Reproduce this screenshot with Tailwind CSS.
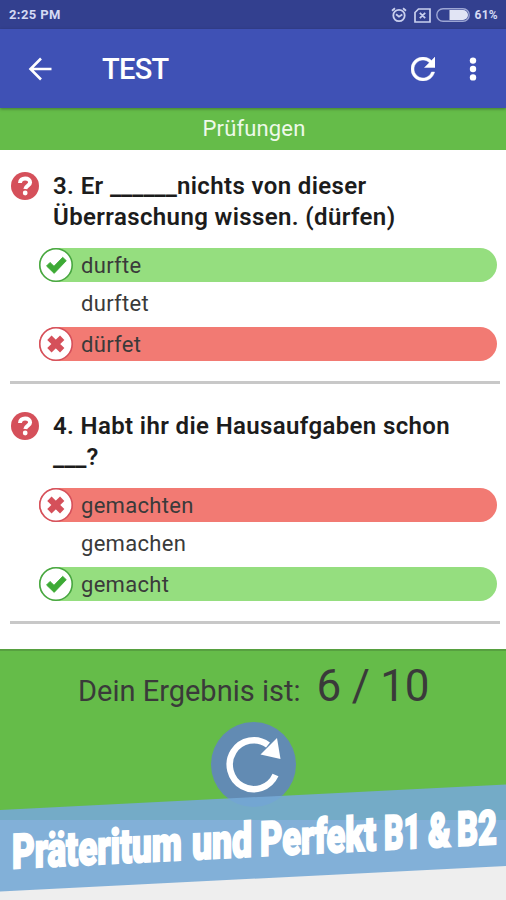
<!DOCTYPE html>
<html lang="de">
<head>
<meta charset="utf-8">
<title>Test</title>
<script src="https://cdn.jsdelivr.net/npm/@tailwindcss/browser@4"></script>
</head>
<body class="w-[506px] h-[900px] overflow-hidden bg-[#eeeeee] font-['Roboto',sans-serif] text-[#3a3a3a]">
<svg class="hidden">
  <symbol id="help" viewBox="0 0 28 28"><circle cx="14" cy="14" r="14" fill="#d5505a"/><path d="M9 11C9 8 11.2 6.5 14.1 6.5C17.1 6.5 19.1 8 19.1 10.5C19.1 13.6 14.8 13.5 14.3 17" fill="none" stroke="#fff" stroke-width="4"/><circle cx="14.2" cy="21" r="2.4" fill="#fff"/></symbol>
  <symbol id="ok" viewBox="0 0 34 34"><circle cx="17" cy="17" r="16.2" fill="#fff" stroke="#48a640" stroke-width="1.6"/><path d="M7.5 18L11 14.4L15 18.2L23.7 9.3L27.3 12.7L15.2 25.4Z" fill="#3daa35" stroke="#3daa35" stroke-width=".8" stroke-linejoin="round"/></symbol>
  <symbol id="bad" viewBox="0 0 34 34"><circle cx="17" cy="17" r="16.2" fill="#fff" stroke="#d5505a" stroke-width="1.6"/><path d="M10.4 10.8L23.2 23.2M23.2 10.8L10.4 23.2" stroke="#d5505a" stroke-width="6.2"/></symbol>
</svg>
<div class="relative flex h-[900px] flex-col">
  <div class="flex h-[29px] shrink-0 items-center justify-between bg-[#33408f] pl-[9px] pr-[8px] text-[12px] font-bold text-[#d5daf3]">
    <span class="pt-px text-[13px] tracking-[0.4px]">2:25 PM</span>
    <div class="flex items-center pt-px">
      <svg class="h-[16px] w-[16px]" viewBox="0 0 16 16" fill="none" stroke="#c9cfee" stroke-width="1.8"><circle cx="8" cy="8.5" r="5.7"/><path d="M1 3.8L4 1.2M15 3.8L12 1.2M5 7.3L8 9.7L11.3 7.5"/></svg>
      <svg class="ml-[7px] h-[15px] w-[17px]" viewBox="0 0 17 15" fill="none" stroke="#c9cfee" stroke-width="1.7"><path d="M4.5 1H16V14H1V4.5ZM5.8 4.8L11.2 10.2M11.2 4.8L5.8 10.2"/></svg>
      <svg class="ml-[5px] h-[14px] w-[34px]" viewBox="0 0 34 14"><rect x=".8" y=".8" width="32.4" height="12.4" rx="6.2" fill="none" stroke="#9da6d4" stroke-width="1.4"/><path d="M13.5 2H27A5 5 0 0 1 27 12H13.5Z" fill="#e1e4f4"/></svg>
      <span class="ml-[4px] tracking-[0.3px]">61%</span>
    </div>
  </div>
  <header class="z-10 flex h-[79px] shrink-0 items-center bg-[#3f51b5] pl-[28px] pr-[29px] shadow-[0_1px_3px_rgba(0,0,0,0.35)]">
    <svg class="h-[24px] w-[24px]" viewBox="0 0 24 24" fill="none" stroke="#fff" stroke-width="2.6"><path d="M23.5 12H3M13 1.5L2.5 12L13 22.5"/></svg>
    <h1 class="ml-[50px] pt-[2px] text-[29px] leading-none font-medium tracking-[-0.7px] text-white">TEST</h1>
    <svg class="ml-auto h-[24px] w-[24px]" viewBox="4 4 16 16"><path fill="#fff" stroke="#fff" stroke-width=".3" d="M17.65 6.35C16.2 4.9 14.21 4 12 4c-4.42 0-7.99 3.58-7.99 8s3.57 8 7.99 8c3.73 0 6.84-2.55 7.73-6h-2.08c-.82 2.33-3.04 4-5.65 4-3.31 0-6-2.69-6-6s2.69-6 6-6c1.66 0 3.14.69 4.22 1.78L13 11h7V4l-2.35 2.35z"/></svg>
    <svg class="ml-[34px] h-[24px] w-[8px]" viewBox="0 0 8 24" fill="#fff"><circle cx="4" cy="3.6" r="3.2"/><circle cx="4" cy="12" r="3.2"/><circle cx="4" cy="20.4" r="3.2"/></svg>
  </header>
  <div class="h-[42px] shrink-0 bg-[#65bc49] pl-[2px] text-center text-[22px] leading-[41px] tracking-[0.15px] text-[#eef9e9]">Prüfungen</div>
  <main class="h-[499px] shrink-0 bg-white">
    <section class="h-[240px] pt-[21px]">
      <div class="flex h-[62px] pl-[11px]">
        <svg class="mt-px h-[28px] w-[28px]"><use href="#help"/></svg>
        <h2 class="ml-[14px] whitespace-nowrap text-[24px] leading-[31px] font-semibold tracking-[0.38px] text-[#1c1c1c]">3. Er <span class="text-[25px] leading-none tracking-normal">______</span>nichts von dieser<br>Überraschung wissen. (dürfen)</h2>
      </div>
      <ul class="ml-[39px] mt-[15px] w-[458px] text-[22px] tracking-[0.3px]">
        <li class="flex h-[34px] items-center rounded-full bg-[#95de7f]"><svg class="h-[34px] w-[34px]"><use href="#ok"/></svg><span class="ml-[8px]">durfte</span></li>
        <li class="flex h-[45px] items-center pl-[42px] pb-[3px]">durftet</li>
        <li class="flex h-[34px] items-center rounded-full bg-[#f27a73]"><svg class="h-[34px] w-[34px]"><use href="#bad"/></svg><span class="ml-[8px]">dürfet</span></li>
      </ul>
      <div class="ml-[10px] mt-[20px] h-[3px] w-[490px] bg-[#c8c8c8]"></div>
    </section>
    <section class="h-[240px] pt-[21px]">
      <div class="flex h-[62px] pl-[11px]">
        <svg class="mt-px h-[28px] w-[28px]"><use href="#help"/></svg>
        <h2 class="ml-[14px] whitespace-nowrap text-[24px] leading-[31px] font-semibold tracking-[0.37px] text-[#1c1c1c]">4. Habt ihr die Hausaufgaben schon<br><span class="text-[25px] leading-none tracking-normal">___</span>?</h2>
      </div>
      <ul class="ml-[39px] mt-[15px] w-[458px] text-[22px] tracking-[0.3px]">
        <li class="flex h-[34px] items-center rounded-full bg-[#f27a73]"><svg class="h-[34px] w-[34px]"><use href="#bad"/></svg><span class="ml-[8px]">gemachten</span></li>
        <li class="flex h-[45px] items-center pl-[42px] pb-[3px]">gemachen</li>
        <li class="flex h-[34px] items-center rounded-full bg-[#95de7f]"><svg class="h-[34px] w-[34px]"><use href="#ok"/></svg><span class="ml-[8px]">gemacht</span></li>
      </ul>
      <div class="ml-[10px] mt-[20px] h-[3px] w-[490px] bg-[#c8c8c8]"></div>
    </section>
  </main>
  <footer class="h-[171px] shrink-0 border-t-2 border-[#57a040] bg-[#65bc49]">
    <div class="flex h-[71px] items-baseline pl-[78px] pt-[2px]">
      <span class="text-[29px]">Dein Ergebnis ist:</span>
      <span class="ml-[16px] text-[44px] tracking-[-0.2px]">6 / 10</span>
    </div>
    <svg class="ml-[211px] h-[85px] w-[85px]" viewBox="0 0 85 85"><circle cx="42.5" cy="42.5" r="42.5" fill="#628bb3"/><path d="M64.5 53A24 24.5 0 1 1 57 23" fill="none" stroke="#fff" stroke-width="6.5"/><path d="M66 16L69.5 37L49.5 32.5Z" fill="#fff"/></svg>
  </footer>
  <svg class="absolute top-0 left-0 h-[900px] w-[506px]" viewBox="0 0 506 900">
    <path d="M0 810L506 784.5V866L0 891.5Z" fill="#76a8d5" fill-opacity=".9"/>
    <g transform="translate(12 868.5) skewY(-2.88)" font-family="Roboto, sans-serif" font-weight="900" font-size="48" fill="#fff" stroke="#fff" stroke-width="2">
      <text x="0" y="0" textLength="170" lengthAdjust="spacingAndGlyphs">Präteritum</text>
      <text x="180" y="0" textLength="60" lengthAdjust="spacingAndGlyphs">und</text>
      <text x="248" y="0" textLength="116" lengthAdjust="spacingAndGlyphs">Perfekt</text>
      <text x="372" y="0" textLength="37" lengthAdjust="spacingAndGlyphs">B1</text>
      <text x="416" y="0" textLength="23" lengthAdjust="spacingAndGlyphs">&amp;</text>
      <text x="445" y="0" textLength="40" lengthAdjust="spacingAndGlyphs">B2</text>
    </g>
  </svg>
</div>
</body>
</html>
